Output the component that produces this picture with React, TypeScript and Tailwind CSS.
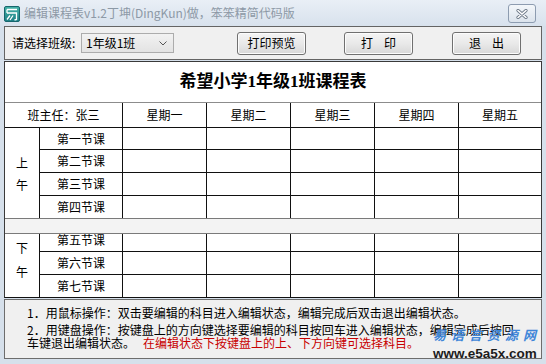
import React from "react";

const days = ["星期一", "星期二", "星期三", "星期四", "星期五"];

function Cells({ label, h, border, clip }: { label: string; h: string; border: boolean; clip?: boolean }) {
  return (
    <div className={`flex ${h} ${border ? "border-b border-[#111]" : ""}`}>
      <div className={`w-[83px] border-r border-[#111] flex justify-center ${clip ? "items-end overflow-hidden" : "items-center"}`}>
        {clip ? (
          <div className="h-[22px] shrink-0 flex items-center">{label}</div>
        ) : (
          label
        )}
      </div>
      <div className="w-[84px] border-r border-[#111]" />
      <div className="w-[84px] border-r border-[#111]" />
      <div className="w-[84px] border-r border-[#111]" />
      <div className="w-[84px] border-r border-[#111]" />
      <div className="flex-1" />
    </div>
  );
}

function Btn({ children }: { children: React.ReactNode }) {
  return (
    <div className="w-[69px] h-[23px] rounded-[3px] border border-[#707070] bg-linear-to-b from-[#f4f4f4] via-[#e9e9e9] to-[#d8d8d8] flex items-center justify-center shadow-[inset_0_0_0_1px_#fcfcfc] text-[12px] text-black">
      {children}
    </div>
  );
}

export default function App() {
  return (
    <div className="relative w-[546px] h-[364px] overflow-hidden bg-[#d6e0eb] flex flex-col font-['Noto_Sans_CJK_SC',sans-serif] text-[12px] text-black">
      {/* title bar */}
      <div className="h-[26px] shrink-0 flex items-center bg-linear-to-b from-[#e9eff6] to-[#d8e2ed] relative">
        <svg className="ml-[4px] mt-[1px]" width="16" height="16" viewBox="0 0 16 16">
          <defs>
            <linearGradient id="ig" x1="0" y1="0" x2="0" y2="1">
              <stop offset="0" stopColor="#46b3a8" />
              <stop offset="1" stopColor="#1d7f86" />
            </linearGradient>
          </defs>
          <rect x="0.5" y="0.5" width="15" height="15" rx="1.5" fill="url(#ig)" stroke="#17666d" />
          <path d="M3 3.5h10M3 3.5v3.5M3 7h9.5v6.5l-2 0.5M6 9.5l-3 4M9 9.5l-3 4.5M12 9.5" stroke="#fff" strokeWidth="1.3" fill="none" />
        </svg>
        <span className="ml-[4px] text-[12px] text-[#8d99a6] tracking-[0px] whitespace-nowrap">编辑课程表v1.2丁坤(DingKun)做，笨笨精简代码版</span>
        <div className="absolute left-[508px] top-[4px] w-[28px] h-[19px] rounded-[3px] border border-[#8d9cb0] bg-linear-to-b from-[#f4f7fa] to-[#dbe3ec] flex items-center justify-center">
          <svg width="12" height="10" viewBox="0 0 12 10">
            <path d="M2 1.5l8 7M10 1.5l-8 7" stroke="#6b7786" strokeWidth="3.2" strokeLinecap="round" />
            <path d="M2 1.5l8 7M10 1.5l-8 7" stroke="#ffffff" strokeWidth="1.6" strokeLinecap="round" />
          </svg>
        </div>
      </div>

      <div className="ml-[4px] w-[538px] flex flex-col">
        {/* toolbar */}
        <div className="h-[34px] border border-[#646464] bg-[#f0f0f0] flex items-center pl-[7px]">
          <div className="w-[69px] whitespace-nowrap">请选择班级:</div>
          <div className="w-[93px] h-[20px] border border-[#acacac] bg-linear-to-b from-[#f2f2f2] to-[#e3e3e3] flex items-center pl-[4px] pr-[6px] justify-between">
            <span>1年级1班</span>
            <svg width="8" height="5" viewBox="0 0 8 5">
              <path d="M0.5 0.5l3.5 3.5 3.5-3.5" stroke="#555" strokeWidth="1" fill="none" />
            </svg>
          </div>
          <div className="ml-[63px]">
            <Btn>打印预览</Btn>
          </div>
          <div className="ml-[38px]">
            <Btn>
              <span className="flex gap-[11px]">
                <span>打</span>
                <span>印</span>
              </span>
            </Btn>
          </div>
          <div className="ml-[39px]">
            <Btn>
              <span className="flex gap-[11px]">
                <span>退</span>
                <span>出</span>
              </span>
            </Btn>
          </div>
        </div>

        {/* table */}
        <div className="mt-[1px] border border-[#3a3a3a] border-b-[#111] bg-white flex flex-col">
          <div className="h-[41px] border-b border-[#8c8c8c] flex items-center justify-center font-['Liberation_Serif','Noto_Sans_CJK_SC',serif] font-bold text-[17px]">
            希望小学1年级1班课程表
          </div>
          <div className="h-[25px] border-b border-[#111] flex">
            <div className="w-[118px] border-r border-[#111] flex items-center justify-center">班主任：张三</div>
            {days.map((d, i) => (
              <div
                key={d}
                className={`${i < 4 ? "w-[84px] border-r border-[#111]" : "flex-1"} flex items-center justify-center`}
              >
                {d}
              </div>
            ))}
          </div>

          {/* morning */}
          <div className="flex">
            <div className="w-[35px] border-r border-[#111] flex flex-col items-center justify-center leading-[22px] pt-[1px]">
              <span>上</span>
              <span>午</span>
            </div>
            <div className="flex-1 flex flex-col">
              <Cells label="第一节课" h="h-[22px]" border />
              <Cells label="第二节课" h="h-[23px]" border />
              <Cells label="第三节课" h="h-[23px]" border />
              <Cells label="第四节课" h="h-[22px]" border={false} />
            </div>
          </div>

          <div className="h-[16px] border-y border-[#7a7a7a] bg-[#f3f3f3]" />

          {/* afternoon */}
          <div className="flex">
            <div className="w-[35px] border-r border-[#111] flex flex-col items-center justify-center leading-[24px] pb-[12px]">
              <span>下</span>
              <span>午</span>
            </div>
            <div className="flex-1 flex flex-col">
              <Cells label="第五节课" h="h-[18px]" border clip />
              <Cells label="第六节课" h="h-[23px]" border />
              <Cells label="第七节课" h="h-[22px]" border={false} />
            </div>
          </div>
        </div>

        {/* instructions */}
        <div className="mt-[1px] h-[60px] border border-[#6d6d6d] bg-[#f0f0f0] pl-[22px] pt-[4px] whitespace-nowrap">
          <div className="leading-[17px]">1．用鼠标操作：双击要编辑的科目进入编辑状态，编辑完成后双击退出编辑状态。</div>
          <div className="leading-[13px] mt-[2px]">
            2．用键盘操作：按键盘上的方向键选择要编辑的科目按回车进入编辑状态，编辑完成后按回
            <br />
            车键退出编辑状态。
            <span className="ml-[8px] text-[#c80000]">在编辑状态下按键盘上的上、下方向键可选择科目。</span>
          </div>
        </div>
      </div>

      {/* watermark */}
      <div className="absolute left-[433px] top-[328px] text-[13px] font-bold italic text-[#3f86d8] tracking-[5px] leading-[14px] whitespace-nowrap">
        易语言资源网
      </div>
      <div className="absolute left-[433px] top-[346px] font-['Liberation_Sans',sans-serif] font-bold text-[13.5px] leading-[15px] text-[#1c1c1c] whitespace-nowrap">
        www.e5a5x.com
      </div>
    </div>
  );
}
